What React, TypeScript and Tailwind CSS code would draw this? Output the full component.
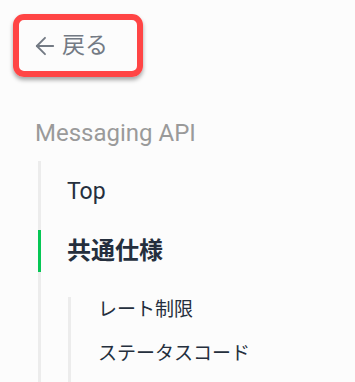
import { ArrowLeft } from "lucide-react";

const jp = "font-['Roboto','Noto_Sans_CJK_JP',sans-serif]";

export default function App() {
  return (
    <div className={`min-h-[382px] w-[355px] bg-[#fcfcfc] ${jp}`}>
      <div className="pl-[13px] pt-[14px]">
        <div className="flex h-[63px] w-[130px] items-center rounded-[11px] border-[6px] border-[#ff4545] pl-[12px] shadow-[0_3px_4px_rgba(0,0,0,0.35)]">
          <a className="flex items-center text-[23px] leading-none text-[#737a84]">
            <ArrowLeft className="h-[28px] w-[28px]" strokeWidth={1.6} />
            <span className="ml-[3px]">戻る</span>
          </a>
        </div>
      </div>

      <div className="pl-[35px] pt-[42px] text-[24px] leading-[28px] text-[#9a9a9a]">Messaging API</div>

      <div className="ml-[38px] mt-[14px] border-l-[3px] border-[#ececec] pt-[10px]">
        <div className="flex h-[42px] items-center pl-[26px] text-[23px] text-[#252f3d]">Top</div>
        <div className="relative mt-[17px] flex h-[42px] items-center pl-[26px] text-[24px] font-bold text-[#252f3d]">
          <span className="absolute left-[-3px] top-0 h-full w-[3px] bg-[#06c755]" />
          共通仕様
        </div>
        <div className="ml-[27px] mt-[25px] border-l-[3px] border-[#ececec] pb-[20px]">
          <div className="flex h-[26px] items-center pl-[27px] text-[19px] text-[#252f3d]">レート制限</div>
          <div className="mt-[18px] flex h-[26px] items-center pl-[27px] text-[19px] text-[#252f3d]">ステータスコード</div>
        </div>
      </div>
    </div>
  );
}
